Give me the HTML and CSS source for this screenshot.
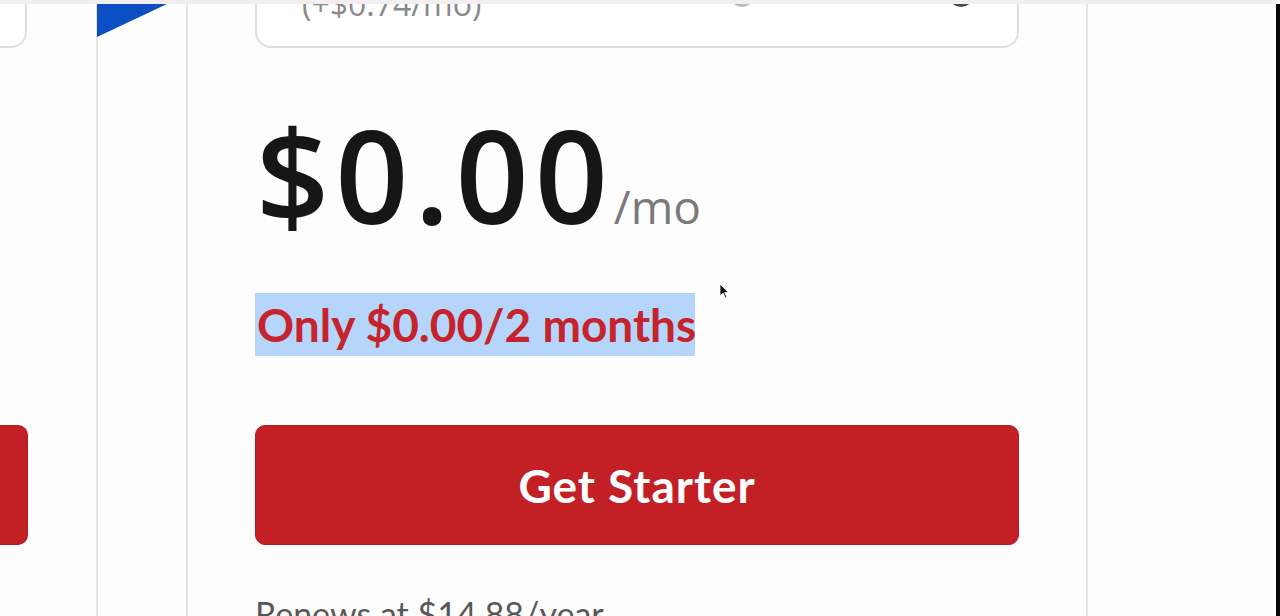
FILE: index.html
```html
<!DOCTYPE html>
<html lang="en">
<head>
<meta charset="utf-8">
<title>Starter plan</title>
<link rel="stylesheet" href="styles.css">
</head>
<body>
<div class="topbar"></div>
<div class="row">
  <div class="plan plan-left">
    <div class="left-box"></div>
    <div class="left-spacer"></div>
    <div class="left-cta"></div>
  </div>
  <div class="gap"></div>
  <div class="plan plan-main">
    <div class="ribbon"></div>
    <div class="addon-box">
      <span class="addon-text">(+$0.74/mo)</span>
      <span class="dot dot-gray"></span>
      <span class="dot dot-dark"></span>
    </div>
    <div class="price"><span class="amount">$0.00</span><span class="per">/mo</span></div>
    <div class="promo"><span class="promo-text">Only $0.00/2 months</span></div>
    <button class="cta">Get Starter</button>
    <div class="renew">Renews at $14.88/year</div>
    <svg class="cursor" width="10" height="16" viewBox="0 0 10 16"><path d="M1 1 L1 13 L4 10 L6.5 15 L8 14.3 L5.6 9.4 L9.4 9.4 Z" fill="#111" stroke="#fff" stroke-width="0.8"/></svg>
  </div>
  <div class="filler"></div>
  <div class="edge"></div>
</div>
</body>
</html>
```
FILE: styles.css
```css
* { box-sizing: border-box; }
html, body { margin: 0; padding: 0; }
body {
  width: 1280px;
  height: 616px;
  overflow: hidden;
  background: #fdfdfd;
  font-family: "Open Sans", "Liberation Sans", sans-serif;
  display: flex;
  flex-direction: column;
}
.topbar {
  height: 4px;
  width: 1276px;
  background: #f3eef0;
  flex: 0 0 auto;
}
.row {
  flex: 1 1 auto;
  display: flex;
  overflow: hidden;
}
.plan {
  display: flex;
  flex-direction: column;
  position: relative;
}
.plan-left {
  width: 98px;
  flex: 0 0 auto;
  align-items: flex-start;
  border-right: 2px solid #e4e4e4;
  background: #fefefe;
}
.left-box {
  width: 27px;
  height: 84px;
  margin-top: -40px;
  border: 2px solid #dedede;
  border-left: none;
  border-radius: 0 16px 16px 0;
  background: #fff;
}
.left-spacer { height: 377px; flex: 0 0 auto; }
.left-cta {
  width: 28px;
  height: 120px;
  border: 1px solid #b41c22;
  border-left: none;
  border-radius: 0 10px 10px 0;
  background: #c32026;
}
.gap { width: 88px; flex: 0 0 auto; background: #fefefe; }
.plan-main {
  width: 902px;
  flex: 0 0 auto;
  border-left: 2px solid #e4e4e4;
  border-right: 2px solid #e4e4e4;
  padding: 0 67px;
  background: #fefefe;
}
.ribbon {
  position: absolute;
  left: -91px;
  top: 0;
  width: 70px;
  height: 33px;
  background: #0c4fc4;
  clip-path: polygon(0 0, 100% 0, 0 100%);
}
.addon-box {
  margin-top: -40px;
  height: 84px;
  border: 2px solid #dedede;
  border-radius: 16px;
  background: #fff;
  display: flex;
  align-items: flex-start;
  padding: 20px 0 28px 45px;
  flex: 0 0 auto;
}
.addon-text {
  font-size: 32px;
  line-height: 36px;
  color: #8a8a8a;
  flex: 0 0 428px;
  white-space: nowrap;
}
.dot {
  width: 24px;
  height: 24px;
  border-radius: 50%;
  margin-top: -3px;
  flex: 0 0 auto;
}
.dot-gray { background: #bdbdbd; }
.dot-dark { background: #4a4a4a; width: 26px; height: 26px; margin-top: -5px; margin-left: 194px; }
.price {
  margin-top: 59px;
  display: flex;
  align-items: baseline;
  line-height: 136px;
  height: 136px;
}
.amount {
  font-size: 128px;
  font-weight: 600;
  color: #161616;
  letter-spacing: 6px;
  margin-left: 1px;
}
.per {
  font-size: 46px;
  color: #7a7a7a;
  margin-left: 0;
}
.promo {
  margin-top: 50px;
  height: 63px;
}
.promo-text {
  display: inline-block;
  font-family: Lato, "Open Sans", sans-serif;
  font-weight: 700;
  font-size: 46px;
  line-height: 63px;
  height: 63px;
  color: #c5242c;
  background: #b5d5fb;
  padding: 0 0 0 2px;
  width: 440px;
  white-space: nowrap;
  overflow: hidden;
}
.cta {
  display: block;
  margin-top: 69px;
  height: 120px;
  width: 100%;
  border: 1px solid #b41c22;
  border-radius: 10px;
  background: #c32026;
  color: #fff;
  font-family: Lato, "Open Sans", sans-serif;
  font-weight: 700;
  font-size: 46px;
  letter-spacing: 1px;
  padding: 0;
  flex: 0 0 auto;
}
.renew {
  margin-top: 48px;
  font-family: Lato, "Open Sans", sans-serif;
  font-size: 34px;
  line-height: 41px;
  color: #585858;
  white-space: nowrap;
}
.cursor {
  position: absolute;
  left: 531px;
  top: 279px;
}
.filler { flex: 1 1 auto; background: #fefefe; }
.edge { width: 4px; flex: 0 0 auto; background: #0a0a0a; }
```
